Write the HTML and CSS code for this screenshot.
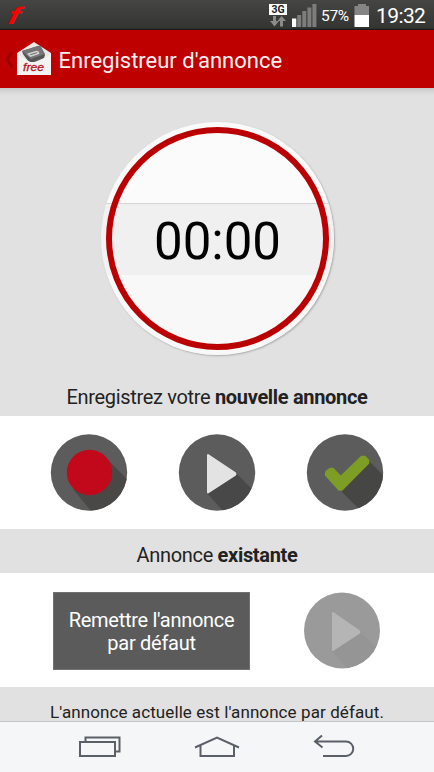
FILE: index.html
```html
<!DOCTYPE html>
<html lang="fr">
<head>
<meta charset="utf-8">
<title>Enregistreur d'annonce</title>
<link rel="stylesheet" href="styles.css">
</head>
<body>
<div class="screen">
  <div class="status">
    <span class="notif">f</span>
    <div class="indicators">
      <div class="network">
        <span class="badge">3G</span>
        <svg width="16" height="11" viewBox="0 0 16 11" fill="#8b8b8b"><path d="M3 0h3v5h3L4.500 10.500 0 5h3zM10 10.500h3V5h3L11.500 0 7.500 5H10z"/></svg>
      </div>
      <svg class="signal" width="25" height="23" viewBox="0 0 25 23"><path fill="#fff" d="M0 14.500h4.300V23H0z"/><path fill="#7d7d7d" d="M5.200 11h4v12h-4zM10.300 7h4v16h-4zM15.400 3.500h4V23h-4zM20.400 0h4v23h-4z"/></svg>
      <span class="percent">57%</span>
      <svg class="battery" width="16" height="23" viewBox="0 0 16 23"><path fill="#858585" d="M4 0h8v2h3v9H.5V2H4z"/><path fill="#fff" d="M.5 11H15v12H.5z"/></svg>
      <span class="clock">19:32</span>
    </div>
  </div>
  <header class="header">
    <svg class="back" width="9" height="20" viewBox="0 0 9 20"><path d="M8 3 3 10.500 8 18" fill="none" stroke="#960000" stroke-width="2.500"/></svg>
    <svg class="logo" width="34" height="36" viewBox="0 0 34 36">
      <path d="M0 12 17 1l17 11v22H0z" fill="#e9e9e9"/>
      <path d="m5 10 16-5q2-.5 3 1l4 8-1 3-12 5-4-2-5-7z" fill="#555"/>
      <path d="m5 10 16-5q2-.5 3 1l4 7-14 5z" fill="#757575"/>
      <path d="m11.500 13 8-2.500q2 0 2 2l-8 2.500z" fill="#6a6a6a" stroke="#d2d2d2" stroke-width="1.600"/>
      <path d="M0 13l13 8h8l13-8v21H0z" fill="#f3f3f3"/>
      <text x="6" y="29.500" class="brand" textLength="21" lengthAdjust="spacingAndGlyphs">free</text>
    </svg>
    <h1 class="title">Enregistreur d'annonce</h1>
  </header>
  <section class="timer">
    <div class="dial"><div class="ring"><span class="time">00:00</span></div></div>
    <p class="label new">Enregistrez votre <b>nouvelle annonce</b></p>
  </section>
  <section class="controls">
    <svg width="78" height="78" viewBox="0 0 78 78">
      <clipPath id="disc"><circle cx="39" cy="38.500" r="38.200"/></clipPath>
      <g clip-path="url(#disc)"><path fill="#5c5c5c" d="M0 0h78v78H0z"/><path fill="#494847" d="m55 23 30 30v40H54L23 55z"/><circle cx="39.500" cy="38.500" r="22.700" fill="#c2081b"/></g>
    </svg>
    <svg width="78" height="78" viewBox="0 0 78 78">
      <g clip-path="url(#disc)"><path fill="#5c5c5c" d="M0 0h78v78H0z"/><path fill="#484848" d="m58 39 35 35v30H69L29 59z"/><path fill="#e3e3e3" stroke="#e3e3e3" stroke-width="2" stroke-linejoin="round" d="M30 21v37.500l27-17.500q1-1 0-2z"/></g>
    </svg>
    <svg width="78" height="78" viewBox="0 0 78 78">
      <g clip-path="url(#disc)"><path fill="#5c5c5c" d="M0 0h78v78H0z"/><path fill="#464645" d="m63 27 30 30v40H75L34 56z"/><path fill="#7e9d25" stroke="#7e9d25" stroke-width="1.500" stroke-linejoin="round" d="M20 37.500 24 34.500h3l7.700 8L55.500 22.500h3.500l3.500 3.700v3L36 56h-3L19.500 41z"/></g>
    </svg>
  </section>
  <p class="label existing">Annonce <b>existante</b></p>
  <section class="current">
    <button class="reset"><span>Remettre l'annonce<br>par défaut</span></button>
    <svg width="77" height="77" viewBox="0 0 77 77">
      <circle cx="38" cy="38.500" r="38" fill="#9a9a9a"/>
      <clipPath id="muted"><circle cx="38" cy="38.500" r="38"/></clipPath>
      <path clip-path="url(#muted)" fill="#969595" d="m56 39 35 35v30H67L28 59z"/>
      <path fill="#b5b5b5" stroke="#b5b5b5" stroke-width="2" stroke-linejoin="round" d="M29 21v37l26-17q1-1 0-2z"/>
    </svg>
  </section>
  <p class="note"><span>L'annonce actuelle est l'annonce par défaut.</span></p>
  <nav class="nav">
    <svg width="434" height="50" viewBox="0 0 434 50" fill="none" stroke="#5b6068" stroke-width="2">
      <path d="M80 20h35v14H80zM85.500 19v-3.500h34V29.500H115"/>
      <path d="m195 25.500 22-10 22 10M200.500 23v11h33.500V23"/>
      <path d="M322 13.500 315 19.500l7.500 6M315 19.500h31a7.200 7.200 0 0 1 0 14.500h-23"/>
    </svg>
  </nav>
</div>
</body>
</html>
```
FILE: styles.css
```css
* { box-sizing: border-box; }
body { margin: 0; font-family: Roboto, "Liberation Sans", sans-serif; color: #222; }
svg { display: block; flex: none; }
.screen { width: 434px; height: 772px; overflow: hidden; display: flex; flex-direction: column; background: #fff; }
.status { height: 30px; flex: none; display: flex; justify-content: space-between; background: linear-gradient(#454643, #343533 94%, #171010); color: #fff; }
.notif { margin-left: 9px; font: italic bold 24px/32px "Liberation Sans", sans-serif; color: #f00; transform: skewX(-12deg) scaleX(1.4); transform-origin: left; }
.indicators { display: flex; padding-right: 8px; }
.network { width: 18px; margin: 4px 5px 0 0; display: flex; flex-direction: column; align-items: center; }
.badge { width: 18px; height: 11px; margin-bottom: 1px; background: #fff; color: #222; font: bold 10.500px/11px Roboto, sans-serif; text-align: center; }
.signal { margin: 4px 4px 0 0; }
.percent { width: 28px; margin-right: 5px; font-size: 15.500px; line-height: 32px; letter-spacing: -.3px; }
.battery { margin: 4px 6px 0 0; }
.clock { width: 50px; font-size: 21px; line-height: 32px; letter-spacing: -.6px; white-space: nowrap; }
.header { height: 58px; flex: none; display: flex; align-items: center; background: #be0000; color: #fff; }
.back { margin-left: 4px; }
.logo { margin: 0 0 0 4px; }
.brand { font: italic 10.500px "Liberation Sans", sans-serif; fill: #b51622; stroke: #b51622; stroke-width: .3px; }
.title { margin: 3px 0 0 7.500px; font-size: 22px; font-weight: 400; line-height: 28px; color: #fff0f0; white-space: nowrap; }
.timer { height: 328px; flex: none; display: flex; flex-direction: column; align-items: center; padding-top: 34px; background: linear-gradient(#c9c9c9, #e1e1e1 7px); }
.dial { width: 233px; height: 233px; flex: none; padding: 5px; border-radius: 50%; margin-left: 1px; background: linear-gradient(#fafafa 81px, #d8d8d8 81px, #d8d8d8 82px, #f2f2f2 82px, #f2f2f2 153px, #f8f8f8 153px); box-shadow: 1px 1px 2px #aaa; }
.ring { height: 223px; border: 6px solid #bb0003; border-radius: 50%; display: flex; align-items: center; justify-content: center; background: linear-gradient(#fbfbfb 70px, #d5d5d5 70px, #d5d5d5 71px, #f0f0f0 71px, #f0f0f0 142px, #f8f8f8 142px) padding-box; }
.time { font-size: 51px; line-height: 60px; color: #000; margin-top: 6px; }
.label { margin: 0; font-size: 20px; line-height: 24px; letter-spacing: -.32px; text-align: center; white-space: nowrap; }
.new { margin-top: 30px; }
.controls { height: 113px; flex: none; display: flex; gap: 50px; padding: 18px 0 0 50px; }
.existing { height: 44px; flex: none; padding-top: 14px; background: #e1e1e1; }
.current { height: 114px; flex: none; display: flex; align-items: flex-start; padding: 19px 0 0 53px; gap: 54px; }
.reset { width: 197px; height: 78px; margin: 0; padding: 2px 0 0; border: 1px solid #727272; background: #5b5b5b; color: #fff; font: 20px/23px Roboto, sans-serif; letter-spacing: -.28px; white-space: nowrap; }
.note { height: 35px; flex: none; margin: 0; padding-top: 14px; background: #e1e1e1; border-bottom: 1px solid #c4c5c6; font-size: 17px; letter-spacing: .09px; line-height: 22px; text-align: center; white-space: nowrap; }
.nav { height: 50px; flex: none; background: #f5f6f8; }
```
